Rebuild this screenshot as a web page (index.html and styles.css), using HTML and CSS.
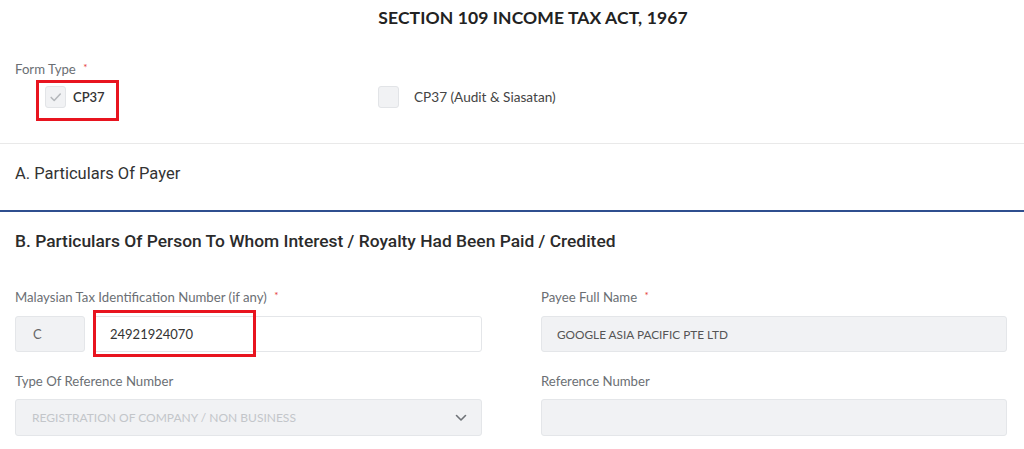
FILE: index.html
```html
<!DOCTYPE html>
<html>
<head>
<meta charset="utf-8">
<link rel="stylesheet" href="styles.css">
</head>
<body>
<div class="page">
  <h1 class="title">SECTION 109 INCOME TAX ACT, 1967</h1>

  <section class="form-type">
    <div class="label">Form Type <span class="req">*</span></div>
    <div class="options">
      <label class="option first">
        <span class="check checked">
          <svg viewBox="0 0 22 22" width="22" height="22"><path d="M6 11.5 L9.5 15 L16.5 7.5" fill="none" stroke="#b4b7bb" stroke-width="1.8" stroke-linecap="round" stroke-linejoin="round"/></svg>
        </span>
        <span class="opt-text">CP37</span>
        <span class="mark mark-cp37"></span>
      </label>
      <label class="option">
        <span class="check"></span>
        <span class="opt-text">CP37 (Audit &amp; Siasatan)</span>
      </label>
    </div>
  </section>

  <section class="sec-a">
    <h2 class="sec-title">A. Particulars Of Payer</h2>
  </section>

  <section class="sec-b">
    <h2 class="sec-title bold">B. Particulars Of Person To Whom Interest / Royalty Had Been Paid / Credited</h2>
    <div class="grid">
      <div class="field">
        <div class="label">Malaysian Tax Identification Number (if any) <span class="req">*</span></div>
        <div class="tin">
          <div class="box prefix">C</div>
          <div class="box white num">24921924070<span class="mark mark-tin"></span></div>
        </div>
      </div>
      <div class="field">
        <div class="label">Payee Full Name <span class="req">*</span></div>
        <div class="box payee">GOOGLE ASIA PACIFIC PTE LTD</div>
      </div>
      <div class="field">
        <div class="label">Type Of Reference Number</div>
        <div class="box select tall">
          <span>REGISTRATION OF COMPANY / NON BUSINESS</span>
          <svg viewBox="0 0 12 8" width="12" height="8"><path d="M1.5 1.5 L6 6 L10.5 1.5" fill="none" stroke="#6f7378" stroke-width="1.6" stroke-linecap="round" stroke-linejoin="round"/></svg>
        </div>
      </div>
      <div class="field">
        <div class="label">Reference Number</div>
        <div class="box tall"></div>
      </div>
    </div>
  </section>
</div>
</body>
</html>
```

FILE: styles.css
```css
* { box-sizing: border-box; }
html, body { margin: 0; padding: 0; background: #fff; }
body {
  font-family: Lato, "Noto Sans", sans-serif;
  color: #333;
  width: 1024px;
  height: 449px;
  overflow: hidden;
}
.page { width: 1024px; }
.title {
  margin: 0;
  height: 36px;
  line-height: 36px;
  padding-left: 42px;
  text-align: center;
  font-size: 17.5px;
  font-weight: 700;
  color: #222;
  letter-spacing: 0.1px;
}
.label {
  font-size: 13.2px;
  line-height: 16px;
  color: #6b6f74;
}
.req { color: #e53935; font-size: 10px; vertical-align: 3px; margin-left: 4px; }

.form-type {
  padding: 23px 15px 35px;
  border-bottom: 1px solid #e9e9e9;
}
.options {
  display: flex;
  margin-top: 9px;
  padding-left: 30px;
}
.option {
  position: relative;
  display: flex;
  align-items: center;
  height: 22px;
  font-size: 13px;
  color: #444;
}
.option.first { width: 333px; }
.check {
  width: 21px;
  height: 22px;
  border: 1px solid #e2e4e7;
  border-radius: 3px;
  background: #f1f2f4;
  display: flex;
  align-items: center;
  justify-content: center;
  margin-right: 7px;
}
.option:not(.first) .check { margin-right: 15px; }
.option:not(.first) .opt-text { font-size: 13.6px; }
.check svg { display: block; }
.opt-text { line-height: 16px; }
.option.first .opt-text { color: #333; font-weight: 600; }

.mark {
  position: absolute;
  border: 3px solid #e8141f;
  pointer-events: none;
}
.mark-cp37 { left: -9px; top: -6px; width: 83px; height: 41px; }
.mark-tin { left: -1px; top: -7px; width: 163px; height: 47px; }

.sec-title {
  margin: 0;
  font-family: Roboto, "Noto Sans", sans-serif;
  font-weight: 400;
  font-size: 16.5px;
  line-height: 20px;
  color: #333;
}
.sec-title.bold { font-weight: 500; font-size: 17.4px; color: #2b2b2b; }
.sec-a {
  padding: 20px 15px 26px;
  border-bottom: 2px solid #2f4f8f;
}
.sec-b { padding: 19px 17px 0 15px; }

.grid {
  display: grid;
  grid-template-columns: 467px 466px;
  column-gap: 59px;
  row-gap: 21px;
  margin-top: 36px;
}
.field .label { margin-bottom: 11px; }
.field:nth-child(n+3) .label { margin-bottom: 10px; }
.tin { display: flex; gap: 8px; }
.box {
  position: relative;
  height: 36px;
  border: 1px solid #e4e6e9;
  border-radius: 3px;
  background: #f1f2f4;
  display: flex;
  align-items: center;
  font-size: 13px;
  color: #555;
}
.box.tall { height: 37px; }
.prefix { width: 70px; padding-left: 17px; color: #666; }
.box.white { background: #fff; flex: 1; padding-left: 16px; color: #333; }
.payee { padding-left: 15px; font-size: 11.8px; color: #555; }
.select {
  justify-content: space-between;
  padding: 0 14px 0 16px;
  font-size: 12px;
  color: #c3c6ca;
}
.select svg { display: block; }
```
